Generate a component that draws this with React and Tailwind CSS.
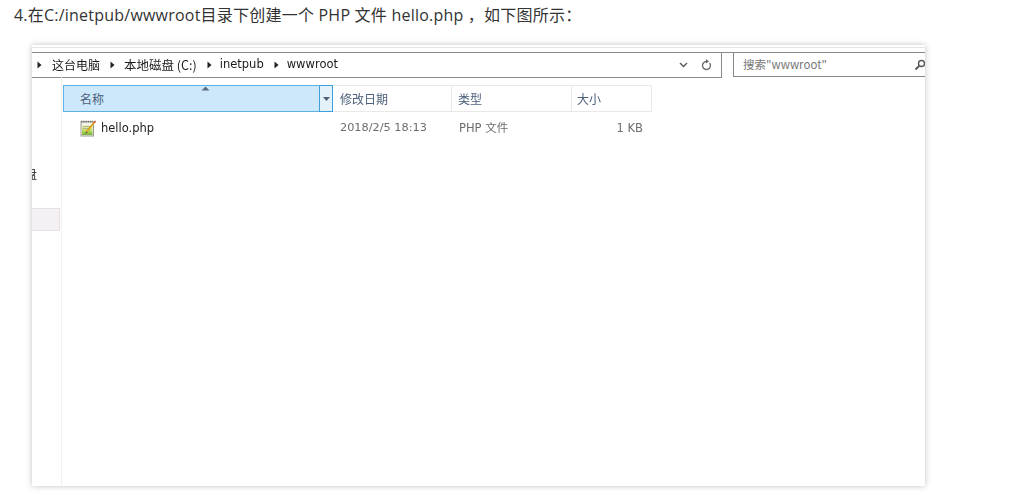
import React from "react";

const sans = "font-['Open_Sans','Noto_Sans_CJK_SC',sans-serif]";

function Tri() {
  return (
    <svg width="5" height="8" viewBox="0 0 5 8" className="shrink-0">
      <path d="M0.5 0.5 L4.5 4 L0.5 7.5 Z" fill="#222" />
    </svg>
  );
}

function PhpIcon() {
  return (
    <svg width="17" height="17" viewBox="0 0 17 17" className="shrink-0">
      <rect x="1" y="2" width="12.5" height="14" fill="#f4f4ee" stroke="#9a9a92" strokeWidth="1" />
      <path d="M1 1.5 H13" stroke="#6f6f6a" strokeWidth="1.5" strokeDasharray="1.4 0.8" />
      <rect x="2" y="5" width="10.5" height="10" fill="url(#g)" />
      <path d="M3 6.5 H10 M3 8.5 H9" stroke="#a8a890" strokeWidth="0.8" />
      <path d="M6.5 12 L14.5 2" stroke="#d9a21c" strokeWidth="2" />
      <path d="M13.5 2.2 L15 0.5 L16 1.5 L15 3" fill="#c8402a" />
      <path d="M5.5 13.5 L6 11.5 L7.5 12.8 Z" fill="#444" />
      <defs>
        <linearGradient id="g" x1="0" y1="0" x2="0" y2="1">
          <stop offset="0" stopColor="#f2f0c0" />
          <stop offset="0.6" stopColor="#bcd95a" />
          <stop offset="1" stopColor="#6fb03c" />
        </linearGradient>
      </defs>
    </svg>
  );
}

export default function App() {
  return (
    <div className={`w-[1014px] h-[498px] overflow-hidden bg-white ${sans}`}>
      <p className="pl-[14px] pt-[4px] h-[45px] text-[16px] leading-[22px] text-[#333] whitespace-pre tracking-[0.22px]">
        4.在C:/inetpub/wwwroot目录下创建一个 PHP 文件 hello.php ，如下图所示：
      </p>
      <div className="ml-[32px] w-[893px] h-[441px] bg-white shadow-[0_0_6px_rgba(0,0,0,0.25)] flex flex-col overflow-hidden font-['DejaVu_Sans','Noto_Sans_CJK_SC',sans-serif] blur-[0.25px]">
        {/* top strip */}
        <div className="h-[8px] shrink-0 border-b border-[#8a8a8a]">
          <div className="mt-[2px] h-px bg-[#e4e4e4]" />
        </div>
        {/* address row */}
        <div className="h-[24px] shrink-0 flex">
          <div className="w-[690px] h-[25px] border-b border-r border-[#8a8a8a] flex items-center pl-[5px] text-[12px] text-[#1a1a1a]">
            <Tri />
            <span className="ml-[10px] font-['Noto_Sans_CJK_SC',sans-serif] text-[12px]">这台电脑</span>
            <span className="ml-[10px]"><Tri /></span>
            <span className="ml-[9px] font-['Noto_Sans_CJK_SC',sans-serif] whitespace-pre text-[12.5px]">本地磁盘 (C:)</span>
            <span className="ml-[10px]"><Tri /></span>
            <span className="ml-[8px] text-[11.5px]">inetpub</span>
            <span className="ml-[10px]"><Tri /></span>
            <span className="ml-[8px] text-[11.5px]">wwwroot</span>
            <div className="ml-auto flex items-center gap-[13px] pr-[9px]">
              <svg width="9" height="6" viewBox="0 0 9 6">
                <path d="M1 1 L4.5 4.5 L8 1" fill="none" stroke="#555" strokeWidth="1.4" />
              </svg>
              <svg width="11" height="12" viewBox="0 0 11 12">
                <path d="M8.6 4 A4 4 0 1 1 5.5 2.5" fill="none" stroke="#666" strokeWidth="1.3" />
                <path d="M5 0 L8 2.5 L5 4.5 Z" fill="#666" />
              </svg>
            </div>
          </div>
          <div className="w-[11px] h-[25px]" />
          <div className="flex-1 h-[25px] border-l border-b border-t border-[#8a8a8a] -mt-px bg-white flex items-center pl-[9px] text-[11px] text-[#777]">
            <span className="font-['Noto_Sans_CJK_SC',sans-serif] text-[11.5px]">搜索"wwwroot"</span>
            <svg width="12" height="12" viewBox="0 0 12 12" className="ml-auto -mr-px">
              <circle cx="7.5" cy="4.5" r="3" fill="none" stroke="#555" strokeWidth="1.4" />
              <path d="M5.2 6.8 L1.5 10.5" stroke="#555" strokeWidth="1.8" />
            </svg>
          </div>
        </div>
        {/* body */}
        <div className="flex-1 flex min-h-0">
          <div className="w-[30px] shrink-0 border-r border-[#f0f0f0] flex flex-col">
            <div className="h-[90px] shrink-0" />
            <div className="h-[14px] w-[5px] overflow-hidden flex justify-end shrink-0 text-[12px] leading-[14px] text-[#222]">
              <span className="shrink-0 font-['Noto_Sans_CJK_SC',sans-serif]">盘</span>
            </div>
            <div className="h-[27px] shrink-0" />
            <div className="h-[23px] w-[28px] bg-[#f5f0f3] border-y border-r border-[#e4e0e2] shrink-0" />
          </div>
          <div className="flex-1 flex flex-col pl-px">
            <div className="mt-[8px] h-[27px] flex text-[12px] text-[#4c607a] font-['Noto_Sans_CJK_SC',sans-serif]">
              <div className="w-[256px] bg-[#cde8fa] border-y border-l border-[#5cb2e6] pl-[16px] flex items-center relative">
                名称
                <svg width="9" height="5" viewBox="0 0 9 5" className="absolute left-[137px] top-0">
                  <path d="M0.5 4.5 L4.5 0.5 L8.5 4.5 Z" fill="#5a6d82" />
                </svg>
              </div>
              <div className="w-[14px] bg-[#e3f1fb] border border-[#3d9fdb] flex items-center justify-center">
                <svg width="7" height="4" viewBox="0 0 7 4">
                  <path d="M0 0 H7 L3.5 4 Z" fill="#4c607a" />
                </svg>
              </div>
              <div className="w-[119px] border-y border-r border-[#e8e8e8] pl-[7px] flex items-center">修改日期</div>
              <div className="w-[120px] border-y border-r border-[#e8e8e8] pl-[6px] flex items-center">类型</div>
              <div className="w-[80px] border-y border-r border-[#e8e8e8] pl-[5px] flex items-center">大小</div>
            </div>
            <div className="mt-[8px] h-[17px] flex items-center text-[11.5px] text-[#6d6d6d]">
              <div className="w-[270px] pl-[17px] flex items-center gap-[4px] shrink-0">
                <PhpIcon />
                <span className="text-[#222] text-[11.5px]">hello.php</span>
              </div>
              <div className="w-[119px] pl-[7px] shrink-0 text-[11.3px]">2018/2/5 18:13</div>
              <div className="w-[120px] pl-[7px] shrink-0 whitespace-pre text-[11.5px]">PHP 文件</div>
              <div className="w-[71px] text-right shrink-0 text-[11.5px]">1 KB</div>
            </div>
          </div>
        </div>
      </div>
    </div>
  );
}
